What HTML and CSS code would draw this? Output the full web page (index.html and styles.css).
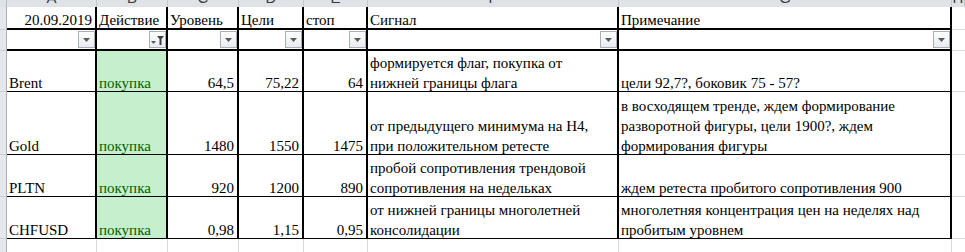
FILE: index.html
```html
<!DOCTYPE html>
<html lang="ru">
<head>
<meta charset="utf-8">
<title>Сигналы</title>
<link rel="stylesheet" href="styles.css">
</head>
<body>
<div class="sheet">
  <!-- column header strip -->
  <div class="corner"></div>
  <div class="ch"><span class="lt">A</span></div>
  <div class="ch"><span class="lt">B</span></div>
  <div class="ch"><span class="lt">C</span></div>
  <div class="ch"><span class="lt">D</span></div>
  <div class="ch"><span class="lt">E</span></div>
  <div class="ch"><span class="lt">F</span></div>
  <div class="ch"><span class="lt">G</span></div>
  <div class="ch ch-x"><span class="lt">H</span></div>

  <!-- header row -->
  <div class="rh"></div>
  <div class="c hd num"><div class="t">20.09.2019</div></div>
  <div class="c hd"><div class="t">Действие</div></div>
  <div class="c hd"><div class="t">Уровень</div></div>
  <div class="c hd"><div class="t">Цели</div></div>
  <div class="c hd"><div class="t">стоп</div></div>
  <div class="c hd"><div class="t">Сигнал</div></div>
  <div class="c hd"><div class="t">Примечание</div></div>
  <div class="x"></div>

  <!-- filter row -->
  <div class="rh"></div>
  <div class="c fl"><span class="fb"><svg width="7" height="4" viewBox="0 0 7 4"><path d="M0 0h7L3.5 4z" fill="#5c5c5c"/></svg></span></div>
  <div class="c fl"><span class="fb"><svg width="13" height="10" viewBox="0 0 13 10"><path d="M0 6h5L2.5 9z" fill="#5c5c5c"/><path d="M6 1h7L10.5 4V10H8.5V4z" fill="#3e3e3e"/></svg></span></div>
  <div class="c fl"><span class="fb"><svg width="7" height="4" viewBox="0 0 7 4"><path d="M0 0h7L3.5 4z" fill="#5c5c5c"/></svg></span></div>
  <div class="c fl"><span class="fb"><svg width="7" height="4" viewBox="0 0 7 4"><path d="M0 0h7L3.5 4z" fill="#5c5c5c"/></svg></span></div>
  <div class="c fl"><span class="fb"><svg width="7" height="4" viewBox="0 0 7 4"><path d="M0 0h7L3.5 4z" fill="#5c5c5c"/></svg></span></div>
  <div class="c fl"><span class="fb"><svg width="7" height="4" viewBox="0 0 7 4"><path d="M0 0h7L3.5 4z" fill="#5c5c5c"/></svg></span></div>
  <div class="c fl"><span class="fb"><svg width="7" height="4" viewBox="0 0 7 4"><path d="M0 0h7L3.5 4z" fill="#5c5c5c"/></svg></span></div>
  <div class="x"></div>

  <!-- Brent -->
  <div class="rh"></div>
  <div class="c"><div class="t">Brent</div></div>
  <div class="c buy"><div class="t">покупка</div></div>
  <div class="c num"><div class="t">64,5</div></div>
  <div class="c num"><div class="t">75,22</div></div>
  <div class="c num"><div class="t">64</div></div>
  <div class="c"><div class="t">формируется флаг, покупка от<br>нижней границы флага</div></div>
  <div class="c"><div class="t">цели 92,7?, боковик 75 - 57?</div></div>
  <div class="x"></div>

  <!-- Gold -->
  <div class="rh"></div>
  <div class="c"><div class="t">Gold</div></div>
  <div class="c buy"><div class="t">покупка</div></div>
  <div class="c num"><div class="t">1480</div></div>
  <div class="c num"><div class="t">1550</div></div>
  <div class="c num"><div class="t">1475</div></div>
  <div class="c"><div class="t">от предыдущего минимума на H4,<br>при положительном ретесте</div></div>
  <div class="c"><div class="t">в восходящем тренде, ждем формирование<br>разворотной фигуры, цели 1900?, ждем<br>формирования фигуры</div></div>
  <div class="x"></div>

  <!-- PLTN -->
  <div class="rh"></div>
  <div class="c"><div class="t">PLTN</div></div>
  <div class="c buy"><div class="t">покупка</div></div>
  <div class="c num"><div class="t">920</div></div>
  <div class="c num"><div class="t">1200</div></div>
  <div class="c num"><div class="t">890</div></div>
  <div class="c"><div class="t">пробой сопротивления трендовой<br>сопротивления на недельках</div></div>
  <div class="c"><div class="t">ждем ретеста пробитого сопротивления 900</div></div>
  <div class="x"></div>

  <!-- CHFUSD -->
  <div class="rh"></div>
  <div class="c"><div class="t">CHFUSD</div></div>
  <div class="c buy"><div class="t">покупка</div></div>
  <div class="c num"><div class="t">0,98</div></div>
  <div class="c num"><div class="t">1,15</div></div>
  <div class="c num"><div class="t">0,95</div></div>
  <div class="c"><div class="t">от нижней границы многолетней<br>консолидации</div></div>
  <div class="c"><div class="t">многолетняя концентрация цен на неделях над<br>пробитым уровнем</div></div>
  <div class="x"></div>

  <!-- empty row -->
  <div class="rh rh-end"></div>
  <div class="e"></div>
  <div class="e"></div>
  <div class="e"></div>
  <div class="e"></div>
  <div class="e"></div>
  <div class="e"></div>
  <div class="e"></div>
  <div class="x x-end"></div>
</div>
</body>
</html>
```
FILE: styles.css
```css
html, body {
  margin: 0;
  padding: 0;
  background: #ffffff;
  overflow: hidden;
}

.sheet {
  display: grid;
  grid-template-columns: 7px 90px 71px 71px 65px 64px 251px 333px 13px;
  grid-template-rows: 7px 23px 21px 41px 63px 42px 42px 13px;
  width: 965px;
  font-family: "Liberation Serif", "Times New Roman", serif;
  font-size: 15px;
  line-height: 20px;
  color: #000000;
}

.sheet > div {
  box-sizing: border-box;
  min-width: 0;
}

/* column header strip */
.corner {
  background: #dfe3e8;
  border-right: 1px solid #b8bec6;
}

.ch {
  background: #dfe3e8;
  border-right: 1px solid #c2c7ce;
  overflow: hidden;
}

.lt {
  display: block;
  margin-top: -12px;
  text-align: center;
  font-family: "Liberation Sans", Arial, sans-serif;
  font-size: 15px;
  line-height: 20px;
  color: #3a3a3a;
}

/* row header strip */
.rh {
  background: #e4e7eb;
  border-right: 1px solid #aab1ba;
  border-bottom: 1px solid #c9cdd3;
}

.rh-end {
  border-bottom: none;
}

/* cells */
.c {
  display: flex;
  flex-direction: column;
  justify-content: flex-end;
  padding: 0 3px 0 2px;
  border-right: 2px solid #000000;
  border-bottom: 1px solid #000000;
  overflow: hidden;
  white-space: nowrap;
}

.t {
  margin-bottom: -2px;
}

.num .t {
  text-align: right;
}

.hd {
  border-bottom: 2px solid #000000;
}

.fl {
  flex-direction: row;
  align-items: flex-end;
  justify-content: flex-end;
  padding: 0 0 1px 0;
  border-bottom: 2px solid #000000;
}

.fb {
  display: flex;
  align-items: center;
  justify-content: center;
  box-sizing: border-box;
  width: 17px;
  height: 17px;
  border: 1px solid #a9afb7;
  background: linear-gradient(#fdfdfd, #e9ecef);
}

.buy {
  background: #c6efce;
  color: #006100;
}

/* gridline-only areas */
.x {
  border-bottom: 1px solid #d8dadd;
}

.x-end {
  border-bottom: none;
}

.e {
  border-right: 1px solid #d8dadd;
}
```
